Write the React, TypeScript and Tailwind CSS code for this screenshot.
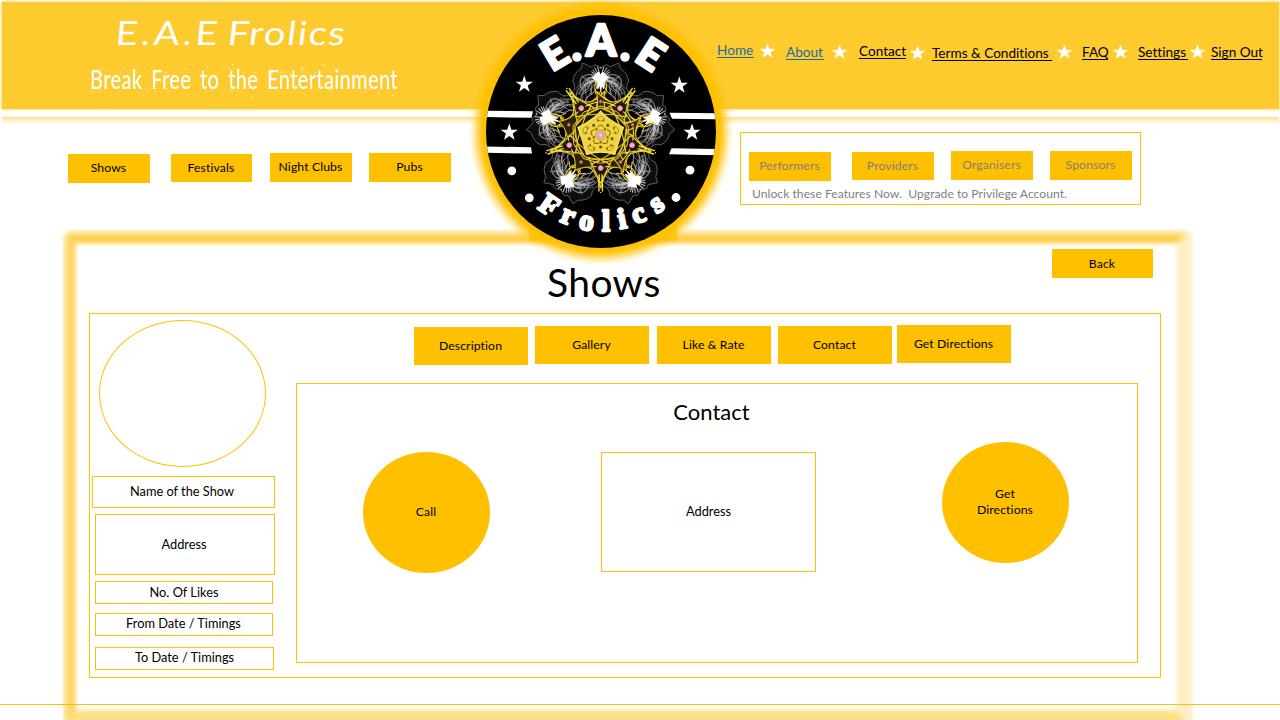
import type { ReactNode } from "react";

const STAR = "M0,-9 L2.1,-2.8 L8.6,-2.8 L3.4,1.1 L5.3,7.3 L0,3.6 L-5.3,7.3 L-3.4,1.1 L-8.6,-2.8 L-2.1,-2.8 Z";
const TURNS = [0, 72, 144, 216, 288];

function createRandom(start: number) {
  let seed = start;
  return () => {
    seed = (seed * 16807) % 2147483647;
    return seed / 2147483647;
  };
}

function NavStar({ className }: { className: string }) {
  return (
    <svg viewBox="-9 -9.5 18 18" preserveAspectRatio="none" className={`h-[14px] w-[15px] shrink-0 ${className}`}>
      <path d={STAR} fill="#fff" stroke="#fff" strokeWidth="0.8" />
    </svg>
  );
}

function NavLink({ className, children }: { className: string; children: ReactNode }) {
  return (
    <a className={`block h-[17px] shrink-0 whitespace-nowrap border-b pt-px text-[13.6px] leading-[17px] ${className}`}>
      {children}
    </a>
  );
}

function Button({ className, children }: { className: string; children: ReactNode }) {
  return (
    <button
      className={`flex shrink-0 items-center justify-center whitespace-nowrap bg-[#ffc000] pr-px text-[12.2px] tracking-[0.12px] ${className}`}
    >
      {children}
    </button>
  );
}

function Field({ className, children }: { className: string; children: ReactNode }) {
  return (
    <div className={`flex shrink-0 items-center justify-center whitespace-nowrap border border-[#ffc000] text-[12.8px] ${className}`}>
      {children}
    </div>
  );
}

/* Fine curved filaments fanning out around each white burst. */
function wisps() {
  const rnd = createRandom(11);
  const list: { d: string; o: number }[] = [];
  for (let i = 0; i < 22; i++) {
    const x1 = 4 + rnd() * 14;
    const y1 = -44 - rnd() * 22;
    const x2 = 10 + rnd() * 18;
    const y2 = -34 - rnd() * 32;
    const x3 = 6 + rnd() * 20;
    const y3 = -30 - rnd() * 30;
    list.push({
      d: `M${(rnd() * 4).toFixed(1)},-57 C${x1.toFixed(1)},${y1.toFixed(1)} ${x2.toFixed(1)},${y2.toFixed(1)} ${x3.toFixed(1)},${y3.toFixed(1)}`,
      o: 0.3 + rnd() * 0.5,
    });
  }
  return list;
}
const WISPS = wisps();

function WispSide() {
  return (
    <>
      <path d="M0,-67 Q6,-73 9,-68 L18,-72 L20,-66 Q27,-62 28,-54 Q24,-48 28,-43 L25,-36" stroke="#6a6a6a" strokeWidth="0.8" fill="#ffffff" fillOpacity="0.05" />
      {WISPS.map((w, i) => (
        <path key={i} d={w.d} stroke="#dcdcdc" strokeWidth="0.6" opacity={w.o} />
      ))}
      <path d="M5,-55 Q12,-52 13,-46 Q19,-44 20,-36 M6,-60 Q16,-62 20,-56 Q22,-50 18,-45 M9,-50 Q8,-42 14,-37 Q17,-33 13,-30" stroke="#b5b5b5" strokeWidth="1.1" opacity="0.75" />
    </>
  );
}

function Mandala() {
  return (
    <g transform="translate(600.7 135)" fill="none" strokeLinecap="round" strokeLinejoin="round">
      {TURNS.map((a) => (
        <g key={a} transform={`rotate(${a})`}>
          <WispSide />
          <g transform="scale(-1 1)">
            <WispSide />
          </g>
          <path d="M-9,-63 L0,-57 L9,-63 M-6,-67 L0,-57 L6,-67 M-3,-68 L0,-57 L3,-68 M-9,-59 L0,-57 L9,-59 M-8,-65 L0,-57 L8,-65" stroke="#c8c8c8" strokeWidth="1" />
          <path d="M-5,-61 L-2,-63 L0,-60 L2,-63 L5,-60 L8,-57 L4,-54 L3,-46 L1,-50 L0,-43 L-1,-50 L-3,-46 L-4,-54 L-8,-57 Z" fill="#fff" stroke="#fff" strokeWidth="0.8" />
          <path d="M-3,-52 L-5,-45 L-10,-40 M3,-52 L5,-45 L10,-40 M-5,-54 L-6,-47 L-5,-41 M5,-54 L6,-47 L5,-41 M0,-44 L0,-36" stroke="#f6d53b" strokeWidth="1" />
          <circle cx="0" cy="-67.5" r="0.8" fill="#e8c832" />
        </g>
      ))}
      {TURNS.map((a) => (
        <g key={a} transform={`rotate(${a})`}>
          <path d="M0,-44 Q-3,-37 -12,-31 Q0,-20 12,-31 Q3,-37 0,-44 Z" fill="#2d2300" stroke="#d6b629" strokeWidth="1.1" />
          <path d="M0,53 Q-3,40 -9,34 Q-16,30 -29,33 Q-20,24 -17,16 L17,16 Q20,24 29,33 Q16,30 9,34 Q3,40 0,53 Z" fill="#302600" fillOpacity="0.8" stroke="#e9c92c" strokeWidth="1.2" />
          <path d="M0,48 L-11,25 M0,48 L11,25 M-20,27 Q0,38 20,27 M-16,28 Q-9,20 0,16 Q9,20 16,28 M-10,31 Q0,20 10,31" stroke="#f4dc4a" strokeWidth="1" />
          <path d="M-1.8,56 L-1.4,40 M1.8,56 L1.4,40" stroke="#f6dc3a" strokeWidth="1.4" />
          <circle cx="0" cy="57.5" r="0.8" fill="#e8c832" />
        </g>
      ))}
      <circle r="26" fill="#1d1700" />
      {TURNS.map((a) => (
        <g key={a} transform={`rotate(${a})`}>
          <path d="M-25,-18 Q0,-24 25,-18 M-17,-23 L0,-29 L17,-23 M-24,-10 Q-12,-25 0,-27 Q12,-25 24,-10" stroke="#e6c52b" strokeWidth="1.1" />
        </g>
      ))}
      <path d="M0,-24 Q5,-17 22.8,-7.4 Q19,3 14.1,19.4 Q0,15 -14.1,19.4 Q-19,3 -22.8,-7.4 Q-5,-17 0,-24 Z" fill="#f0d242" stroke="#fbe873" strokeWidth="1.2" />
      {TURNS.map((a) => (
        <g key={a} transform={`rotate(${a})`}>
          <path d="M-4,-16 Q0,-21 4,-16 Q0,-12 -4,-16" stroke="#a58412" strokeWidth="0.7" />
          <path d="M-3,-8 Q0,-12 3,-8" stroke="#81660b" strokeWidth="1" />
          <circle cx="2.6" cy="-14.5" r="0.9" fill="#6b5400" />
          <circle cx="-2.6" cy="-14.5" r="0.9" fill="#6b5400" />
          <circle cx="0" cy="12" r="1.5" fill="#6b5400" />
          <circle cx="0" cy="7.2" r="1.3" fill="#8f7114" />
          <circle cx="0" cy="33" r="4.4" fill="#1c0d05" />
          <circle cx="0" cy="33" r="2.6" fill="#f7a9d8" stroke="#c77a94" strokeWidth="0.8" />
          <circle cx="0" cy="-33.5" r="1.7" fill="#e07fb5" stroke="#7b4530" strokeWidth="0.7" />
        </g>
      ))}
      <circle r="4.6" fill="#fff3b0" stroke="#9a7a20" strokeWidth="0.8" />
      <circle r="3.4" fill="#f08fcb" />
      <circle r="1.5" fill="#ffe2f4" />
    </g>
  );
}

const TOP_LETTERS = [
  { t: "E", x: 554.5, y: 53.5, r: -31, s: 41 },
  { t: "A", x: 601, y: 40.5, r: 0, s: 43 },
  { t: "E", x: 651, y: 54, r: 33, s: 41 },
];
const BOTTOM_LETTERS = [
  { t: "F", x: 549.5, y: 205, r: 34 },
  { t: "r", x: 568.5, y: 214.5, r: 22 },
  { t: "o", x: 587, y: 220.5, r: 9 },
  { t: "l", x: 606, y: 221.5, r: 0 },
  { t: "i", x: 622, y: 219, r: -11 },
  { t: "c", x: 638, y: 213, r: -20 },
  { t: "s", x: 656, y: 203, r: -33 },
];

function Emblem() {
  return (
    <svg viewBox="456 0 290 280" className="pointer-events-none absolute left-[456px] top-0 h-[280px] w-[290px]">
      <defs>
        <filter id="glow" x="-20%" y="-20%" width="140%" height="140%">
          <feGaussianBlur stdDeviation="4.5" />
        </filter>
        <clipPath id="disc">
          <ellipse cx="601" cy="131.5" rx="115" ry="116.5" />
        </clipPath>
      </defs>
      <ellipse cx="601" cy="131.5" rx="125" ry="126.5" fill="#ffc000" filter="url(#glow)" />
      <rect x="529" y="224" width="148" height="17" fill="#ffc000" opacity="0.65" />
      <ellipse cx="601" cy="131.5" rx="115" ry="116.5" fill="#000" />
      <g clipPath="url(#disc)" fill="#fff">
        <path d="M480,110.7 L533,111.3 L531.5,117.8 L480,117 Z" />
        <path d="M480,146.3 L531,147.3 L532,153.6 L480,152.6 Z" />
        <path d="M669.5,112.7 L720,113.3 L720,119.3 L672,118.7 Z" />
        <path d="M671.5,148.3 L720,149 L720,155.3 L669,154.3 Z" />
      </g>
      <Mandala />
      <g fill="#fff">
        <path d={STAR} transform="translate(524.3 84.5)" />
        <path d={STAR} transform="translate(679.3 85.5)" />
        <path d={STAR} transform="translate(509.3 132.5)" />
        <path d={STAR} transform="translate(692 132.5)" />
        <circle cx="511.8" cy="170.8" r="4.4" />
        <circle cx="690" cy="170.2" r="4.4" />
        <circle cx="529.3" cy="197.8" r="4.4" />
        <circle cx="676" cy="197.5" r="4.4" />
        <circle cx="577" cy="57" r="4.8" />
        <circle cx="625" cy="57" r="4.8" />
        {TOP_LETTERS.map((l, i) => (
          <text
            key={i}
            transform={`translate(${l.x} ${l.y}) rotate(${l.r})`}
            y={l.s * 0.36}
            textAnchor="middle"
            fontSize={l.s}
            className="font-['Lato',sans-serif] font-black"
            stroke="#fff"
            strokeWidth="2.4"
            strokeLinejoin="round"
          >
            {l.t}
          </text>
        ))}
        {BOTTOM_LETTERS.map((l, i) => (
          <text
            key={i}
            transform={`translate(${l.x} ${l.y}) rotate(${l.r})`}
            y="9.5"
            textAnchor="middle"
            fontSize="29"
            className="font-['Liberation_Serif',serif] font-bold"
            stroke="#fff"
            strokeWidth="2.4"
            strokeLinejoin="round"
          >
            {l.t}
          </text>
        ))}
      </g>
    </svg>
  );
}

/* Pale chalk dust scattered around the tagline. */
function dust() {
  const rnd = createRandom(29);
  return Array.from({ length: 130 }, () => ({
    x: rnd() * 308,
    y: rnd() < 0.55 ? 2 + rnd() * 14 : 26 + rnd() * 11,
    r: 0.35 + rnd() * 0.5,
  }));
}
const DUST = dust();

function Header() {
  return (
    <>
      <header className="flex h-[110px] shrink-0 pl-[2px] pr-px pt-[2px]">
        <div className="flex h-[107px] w-full bg-[#fecb2f] shadow-[0_0_2px_1px_#ffe08a]">
          <div className="w-[460px] pl-[88px] pt-[8px] text-white">
            <h1 className="flex h-[44px] items-center whitespace-nowrap pl-[26px] font-['Lato',cursive] text-[33px] leading-[44px]">
              <span className="w-[112px] origin-left -skew-x-4 scale-x-[1.15] tracking-[3.1px]">E.A.E</span>
              <span className="origin-left -skew-x-6 scale-x-[1.15] tracking-[1.5px]">Frolics</span>
            </h1>
            <div className="relative">
              <svg viewBox="0 0 310 38" className="absolute left-0 top-[7px] h-[38px] w-[310px]">
                {DUST.map((p, i) => (
                  <circle key={i} cx={p.x} cy={p.y} r={p.r} fill="#ffedb0" />
                ))}
              </svg>
              <p className="relative w-[410px] origin-left scale-x-[0.74] whitespace-nowrap font-['Lato',cursive] text-[27px] font-medium leading-[49px] tracking-[0.5px] [word-spacing:4.6px]">
                Break Free to the Entertainment
              </p>
            </div>
          </div>
          <nav className="flex h-[60px] items-start pl-[255px] pt-[39px]">
            <NavLink className="w-[37px] border-[#1f6a9c] text-[#1f6a9c]">Home</NavLink>
            <NavStar className="ml-[6px] mt-[3px]" />
            <NavLink className="ml-[11px] mt-[2px] w-[38px] border-[#1f6a9c] text-[#1f6a9c]">About</NavLink>
            <NavStar className="ml-[8px] mt-[4px]" />
            <NavLink className="ml-[12px] mt-px w-[47px] border-black">Contact</NavLink>
            <NavStar className="ml-[4px] mt-[5px]" />
            <NavLink className="ml-[7px] mt-[3px] w-[120px] border-black">Terms &amp; Conditions</NavLink>
            <NavStar className="ml-[5px] mt-[4px]" />
            <NavLink className="ml-[10px] mt-[2px] w-[26px] border-black">FAQ</NavLink>
            <NavStar className="ml-[5px] mt-[4px]" />
            <NavLink className="ml-[10px] mt-[2px] w-[50px] border-black">Settings</NavLink>
            <NavStar className="ml-[2px] mt-[4px]" />
            <NavLink className="ml-[6px] mt-[2px] w-[51px] border-black">Sign Out</NavLink>
          </nav>
        </div>
      </header>
      <div className="ml-[2px] mr-px mt-[7px] h-[7px] shrink-0 bg-linear-to-b from-[#ffe08a] to-white" />
    </>
  );
}

function Categories() {
  return (
    <section className="flex h-[106px] shrink-0 items-start">
      <div className="flex w-[740px] pl-[68px] pt-[29px]">
        <Button className="mt-px h-[29px] w-[82px]">Shows</Button>
        <Button className="ml-[21px] mt-px h-[28px] w-[81px]">Festivals</Button>
        <Button className="ml-[18px] h-[29px] w-[82px]">Night Clubs</Button>
        <Button className="ml-[17px] h-[29px] w-[82px]">Pubs</Button>
      </div>
      <div className="mt-[8px] h-[73px] w-[401px] border border-[#ffc000] pl-[8px] pt-[18px] text-[#7f7f7f]">
        <div className="flex">
          <Button className="mt-px h-[29px] w-[82px]">Performers</Button>
          <Button className="ml-[21px] mt-px h-[28px] w-[82px]">Providers</Button>
          <Button className="ml-[17px] h-[29px] w-[82px]">Organisers</Button>
          <Button className="ml-[17px] h-[29px] w-[82px]">Sponsors</Button>
        </div>
        <p className="whitespace-nowrap pl-[3px] pt-[4px] text-[12.2px] leading-[18px]">
          Unlock these Features Now.&nbsp; Upgrade to Privilege Account.
        </p>
      </div>
    </section>
  );
}

function FrameGlow() {
  return (
    <>
      <div className="absolute -bottom-[6px] left-[63px] top-[230px] w-[1130px] rounded-[9px] border-[13px] border-[#fff0cc] blur-[1px]" />
      <div className="absolute -bottom-[4px] left-[66px] top-[234px] w-[1120px] rounded-[4px] border-x-[9px] border-b-[14px] border-t-[9px] border-b-[#ffe084] border-l-[#ffd462] border-r-[#ffeec2] border-t-[#ffce48] blur-[2.5px]" />
    </>
  );
}

function ShowSummary() {
  return (
    <aside className="flex w-[206px] shrink-0 flex-col pt-[6px]">
      <div className="ml-[9px] h-[147px] w-[167px] shrink-0 rounded-[50%] border border-[#ffc000]" />
      <Field className="ml-[2px] mt-[9px] h-[32px] w-[183px] pr-[3px]">Name of the Show</Field>
      <Field className="ml-[5px] mt-[6px] h-[61px] w-[180px] pr-[2px]">Address</Field>
      <Field className="ml-[5px] mt-[6px] h-[23px] w-[178px]">No. Of Likes</Field>
      <Field className="ml-[5px] mt-[9px] h-[23px] w-[178px] pb-px pr-px">From Date / Timings</Field>
      <Field className="ml-[5px] mt-[11px] h-[23px] w-[179px] pb-px">To Date / Timings</Field>
    </aside>
  );
}

function ShowDetails() {
  return (
    <div className="pt-[11px]">
      <div className="flex h-[58px] items-start pl-[118px]">
        <Button className="mt-[2px] h-[38px] w-[114px]">Description</Button>
        <Button className="ml-[7px] mt-px h-[38px] w-[114px]">Gallery</Button>
        <Button className="ml-[8px] mt-px h-[38px] w-[114px]">Like &amp; Rate</Button>
        <Button className="ml-[7px] mt-px h-[38px] w-[114px]">Contact</Button>
        <Button className="ml-[5px] h-[38px] w-[114px]">Get Directions</Button>
      </div>
      <section className="h-[280px] w-[842px] border border-[#ffc000]">
        <h3 className="h-[58px] pr-[11px] pt-[13px] text-center text-[22px] leading-[30px]">Contact</h3>
        <div className="flex items-start pl-[66px]">
          <Button className="mt-[10px] h-[121px] w-[127px] rounded-[50%]">Call</Button>
          <Field className="ml-[111px] mt-[10px] h-[120px] w-[215px]">Address</Field>
          <Button className="ml-[126px] h-[121px] w-[127px] rounded-[50%] pb-[2px] leading-[16px]">
            <span>
              Get
              <br />
              Directions
            </span>
          </Button>
        </div>
      </section>
    </div>
  );
}

export default function App() {
  return (
    <div className="relative flex h-[720px] w-[1280px] flex-col overflow-hidden bg-white font-['Lato',sans-serif] text-black [font-variant-ligatures:none]">
      <FrameGlow />
      <Header />
      <Categories />
      <main className="relative z-10 flex h-[474px] shrink-0 flex-col pl-[89px]">
        <div className="flex h-[83px] items-start">
          <h2 className="w-[963px] pl-[458px] pt-[29px] text-[39px] leading-[46px] tracking-[0.4px]">Shows</h2>
          <Button className="mt-[19px] h-[29px] w-[101px] pt-px">Back</Button>
        </div>
        <div className="flex h-[365px] w-[1072px] border border-[#ffc000]">
          <ShowSummary />
          <ShowDetails />
        </div>
      </main>
      <hr className="relative z-10 m-0 h-px shrink-0 border-0 bg-[#ffc000]" />
      <Emblem />
    </div>
  );
}
